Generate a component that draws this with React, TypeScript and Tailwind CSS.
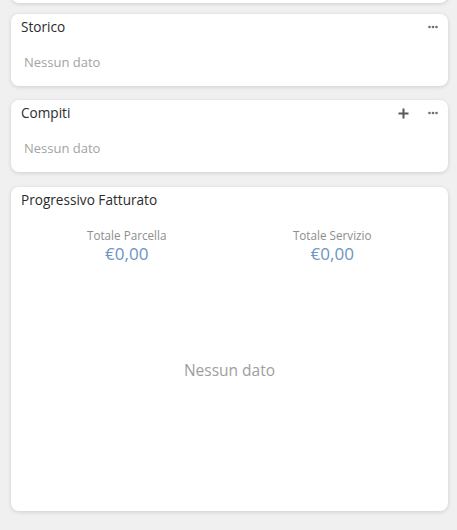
import React from 'react';

const font = { fontFamily: '"Open Sans", "Liberation Sans", sans-serif' };

const Dots = () => (
    <svg width="10" height="4" viewBox="0 0 10 4" className="text-[#6b6f76]">
        <circle cx="1.5" cy="2" r="1.3" fill="currentColor" />
        <circle cx="5" cy="2" r="1.3" fill="currentColor" />
        <circle cx="8.5" cy="2" r="1.3" fill="currentColor" />
    </svg>
);

const Plus = () => (
    <svg width="11" height="11" viewBox="0 0 11 11" className="text-[#555a60]">
        <path d="M5.5 0.5v10M0.5 5.5h10" stroke="currentColor" strokeWidth="2" />
    </svg>
);

const Card = ({ children, className = '' }: { children: React.ReactNode; className?: string }) => (
    <div className={`bg-white rounded-[8px] shadow-[0_1px_4px_rgba(0,0,0,0.14)] ${className}`}>{children}</div>
);

const CardHeader = ({ title, add, menu = true }: { title: string; add?: boolean; menu?: boolean }) => (
    <div className="flex items-center justify-between pl-[10px] pr-[10px] pt-[3px] h-[23px]">
        <span className="text-[13.6px] leading-[20px] text-[#2b2b2b]">{title}</span>
        <div className="flex items-center gap-[19px]">
            {add && <Plus />}
            {menu && <Dots />}
        </div>
    </div>
);

const Empty = () => (
    <div className="pl-[13px] pt-[16px] text-[13px] leading-[18px] text-[#a3a3a3]">Nessun dato</div>
);

export default function App() {
    return (
        <div className="min-h-[530px] bg-[#f0f0f0] pl-[11px] pr-[9px] pb-[19px] overflow-hidden" style={font}>
            {/* card precedente, tagliata in alto */}
            <Card className="h-[40px] -mt-[37px] mb-[11px]"><div /></Card>

            <Card className="h-[72px] mb-[14px]">
                <CardHeader title="Storico" />
                <Empty />
            </Card>

            <Card className="h-[72px] mb-[15px]">
                <CardHeader title="Compiti" add />
                <Empty />
            </Card>

            <Card className="h-[324px] flex flex-col">
                <CardHeader title="Progressivo Fatturato" menu={false} />
                <div className="grid grid-cols-2 px-[13px] pt-[17px]">
                    {['Totale Parcella', 'Totale Servizio'].map(label => (
                        <div key={label} className="flex flex-col items-center">
                            <span className="text-[11.7px] leading-[16px] text-[#8e8e8e]">{label}</span>
                            <span className="text-[17px] leading-[22px] text-[#6b93c4]">€0,00</span>
                        </div>
                    ))}
                </div>
                <div className="h-[200px] mt-[6px] flex items-center justify-center text-[15.5px] text-[#9e9e9e]">
                    Nessun dato
                </div>
            </Card>
        </div>
    );
}
